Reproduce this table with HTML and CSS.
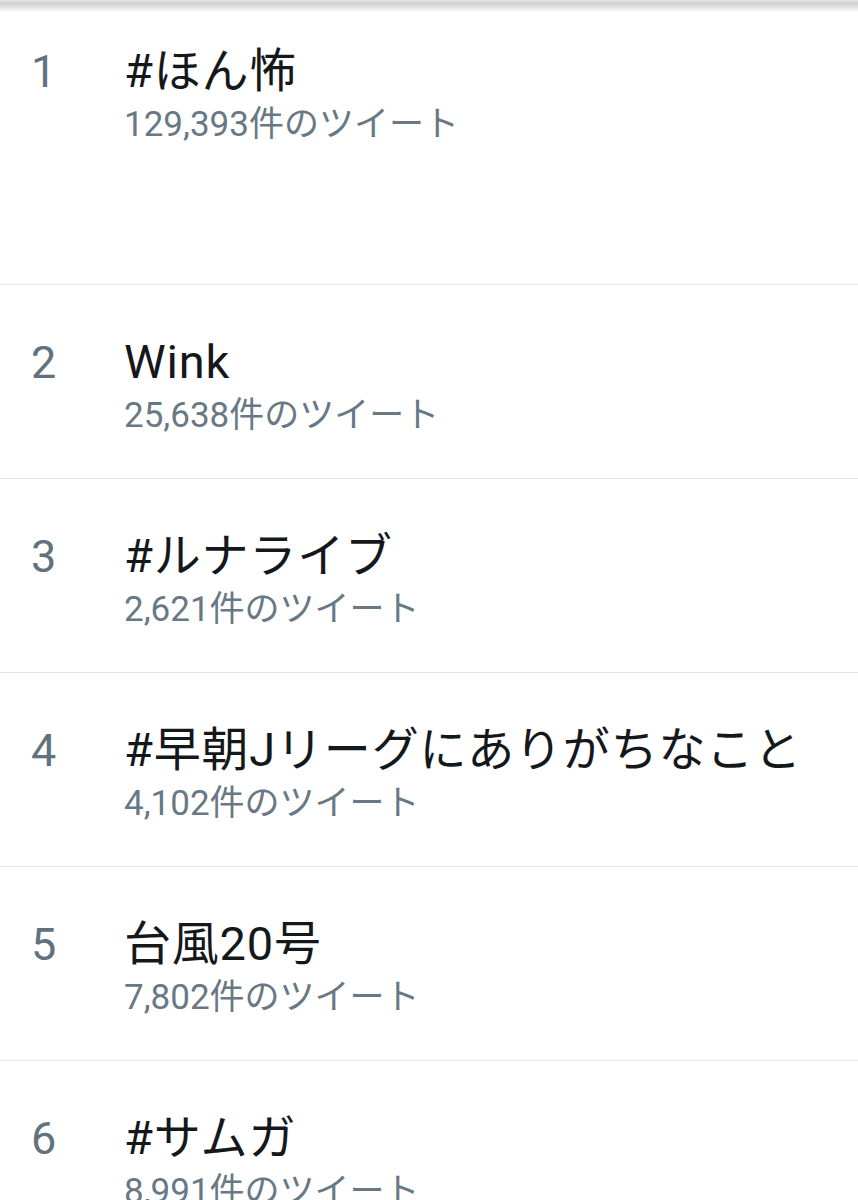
FILE: index.html
```html
<!DOCTYPE html>
<html lang="ja">
<head>
    <meta charset="UTF-8">
    <meta name="viewport" content="width=device-width, initial-scale=1.0">
    <title>トレンド</title>
    <link rel="stylesheet" href="styles.css">
</head>
<body>
    <div class="shadow"></div>
    <section class="trends">
        <article class="trend first">
            <span class="rank">1</span>
            <div class="info">
                <p class="name">#ほん怖</p>
                <p class="count">129,393件のツイート</p>
            </div>
        </article>
        <article class="trend">
            <span class="rank">2</span>
            <div class="info">
                <p class="name">Wink</p>
                <p class="count">25,638件のツイート</p>
            </div>
        </article>
        <article class="trend">
            <span class="rank">3</span>
            <div class="info">
                <p class="name">#ルナライブ</p>
                <p class="count">2,621件のツイート</p>
            </div>
        </article>
        <article class="trend">
            <span class="rank">4</span>
            <div class="info">
                <p class="name">#早朝Jリーグにありがちなこと</p>
                <p class="count">4,102件のツイート</p>
            </div>
        </article>
        <article class="trend">
            <span class="rank">5</span>
            <div class="info">
                <p class="name">台風20号</p>
                <p class="count">7,802件のツイート</p>
            </div>
        </article>
        <article class="trend">
            <span class="rank">6</span>
            <div class="info">
                <p class="name">#サムガ</p>
                <p class="count">8,991件のツイート</p>
            </div>
        </article>
    </section>
</body>
</html>
```

FILE: styles.css
```css
body{
    margin: 0px;
    background: #ffffff;
    font-family: Roboto, "Noto Sans CJK JP", sans-serif;
    overflow: hidden;
}
.shadow{
    position: absolute;
    top: 0px;
    left: 0px;
    right: 0px;
    height: 12px;
    background: linear-gradient(to bottom, #e6e6e6 0px, #cfcfcf 3px, #dcdcdc 6px, rgba(255,255,255,0) 12px);
}
.trends{
    display: flex;
    flex-direction: column;
}
.trend{
    display: flex;
    align-items: baseline;
    box-sizing: border-box;
    height: 194px;
    padding: 49px 0px 0px 31px;
    border-bottom: 1px solid #e1e8ed;
}
.trend.first{
    height: 285px;
    padding-top: 43px;
}
.rank{
    width: 93px;
    font-size: 45px;
    line-height: 56px;
    color: #61717d;
}
.info p{
    margin: 0px;
    white-space: nowrap;
}
.name{
    font-size: 47px;
    line-height: 56px;
    letter-spacing: 0.8px;
    color: #15181b;
}
.count{
    font-size: 35px;
    line-height: 52px;
    color: #687884;
}
```
